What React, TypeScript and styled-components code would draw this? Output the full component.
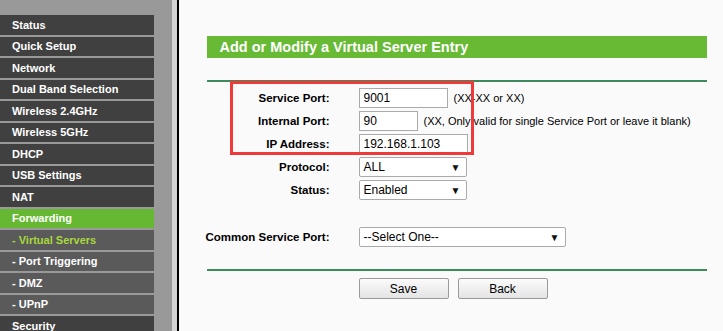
import React from 'react';
import styled, { createGlobalStyle } from 'styled-components';

const GlobalStyle = createGlobalStyle`
  html, body {
    margin: 0;
    padding: 0;
    background: #fafafa;
    font-family: "Liberation Sans", Arial, sans-serif;
  }
`;

const Page = styled.div`
  display: flex;
  width: 723px;
  height: 331px;
  overflow: hidden;
`;

const Sidebar = styled.nav`
  flex: 0 0 172px;
  background: #999999;
  padding-top: 15px;
  border-right: 5px solid #d4d4d4;
`;

const Edge = styled.div`
  flex: 0 0 1.5px;
  background: #000;
`;

const MenuItem = styled.div<{ $sub?: boolean; $active?: boolean; $current?: boolean }>`
  width: 154px;
  height: 19.5px;
  margin-bottom: 2px;
  box-sizing: border-box;
  padding-left: 12px;
  display: flex;
  align-items: center;
  font-size: 11px;
  font-weight: bold;
  white-space: nowrap;
  color: ${(p) => (p.$current ? '#a8d83c' : '#ffffff')};
  background: ${(p) => (p.$active ? '#66b832' : p.$sub ? '#5a5a5a' : '#404040')};
`;

const Main = styled.main`
  flex: 1;
  background: #fafafa;
  padding-left: 28px;
`;

const Header = styled.h2`
  margin: 36px 0 0;
  width: 500px;
  height: 22px;
  box-sizing: border-box;
  padding-left: 13px;
  background: #68b934;
  color: #fff;
  font-size: 14.5px;
  font-weight: bold;
  line-height: 22px;
`;

const Rule = styled.div<{ $top: number }>`
  width: 500px;
  height: 2px;
  margin-top: ${(p) => p.$top}px;
  background: #3f8a5c;
`;

const Form = styled.div`
  position: relative;
  margin-top: 6px;
`;

const Row = styled.div<{ $gap?: number }>`
  display: grid;
  grid-template-columns: 123px auto;
  column-gap: 29px;
  align-items: center;
  height: 20px;
  margin-bottom: ${(p) => p.$gap ?? 3}px;
`;

const Label = styled.div`
  justify-self: end;
  white-space: nowrap;
  font-size: 11.5px;
  font-weight: bold;
  color: #000;
`;

const Field = styled.div`
  display: flex;
  align-items: center;
  gap: 6px;
`;

const Input = styled.div<{ $w: number }>`
  width: ${(p) => p.$w}px;
  height: 20px;
  box-sizing: border-box;
  border: 1px solid #aaaaaa;
  background: #fff;
  padding-left: 4px;
  font-size: 12px;
  line-height: 18px;
  color: #000;
`;

const Select = styled.div<{ $w: number }>`
  width: ${(p) => p.$w}px;
  height: 20px;
  box-sizing: border-box;
  border: 1px solid #aaaaaa;
  border-radius: 2px;
  background: #fff;
  padding: 0 5px 0 4px;
  display: flex;
  align-items: center;
  justify-content: space-between;
  font-size: 12px;
  color: #000;
`;

const Arrow = styled.span`
  font-size: 10px;
  color: #111;
`;

const Hint = styled.span`
  font-size: 11px;
  color: #000;
  white-space: nowrap;
`;

const Highlight = styled.div`
  position: absolute;
  left: 23px;
  top: -7px;
  width: 244px;
  height: 74px;
  box-sizing: border-box;
  border: 3px solid #f03a3a;
  pointer-events: none;
`;

const Buttons = styled.div`
  display: flex;
  gap: 9px;
  margin: 7px 0 0 152px;
`;

const Button = styled.button`
  width: 90px;
  height: 21px;
  border: 1px solid #9a9a9a;
  border-radius: 2px;
  background: linear-gradient(#fbfbfb, #e4e4e4);
  font-family: "Liberation Sans", Arial, sans-serif;
  font-size: 12px;
  color: #000;
  padding: 0;
`;

const menu = [
  { label: 'Status' },
  { label: 'Quick Setup' },
  { label: 'Network' },
  { label: 'Dual Band Selection' },
  { label: 'Wireless 2.4GHz' },
  { label: 'Wireless 5GHz' },
  { label: 'DHCP' },
  { label: 'USB Settings' },
  { label: 'NAT' },
  { label: 'Forwarding', active: true },
  { label: '- Virtual Servers', sub: true, current: true },
  { label: '- Port Triggering', sub: true },
  { label: '- DMZ', sub: true },
  { label: '- UPnP', sub: true },
  { label: 'Security' },
];

const App: React.FC = () => (
  <>
    <GlobalStyle />
    <Page>
      <Sidebar>
        {menu.map((m) => (
          <MenuItem key={m.label} $sub={m.sub} $active={m.active} $current={m.current}>
            {m.label}
          </MenuItem>
        ))}
      </Sidebar>
      <Edge />
      <Main>
        <Header>Add or Modify a Virtual Server Entry</Header>
        <Rule $top={22} />
        <Form>
          <Row>
            <Label>Service Port:</Label>
            <Field>
              <Input $w={89}>9001</Input>
              <Hint>(XX-XX or XX)</Hint>
            </Field>
          </Row>
          <Row>
            <Label>Internal Port:</Label>
            <Field>
              <Input $w={59}>90</Input>
              <Hint>(XX, Only valid for single Service Port or leave it blank)</Hint>
            </Field>
          </Row>
          <Row>
            <Label>IP Address:</Label>
            <Field>
              <Input $w={109}>192.168.1.103</Input>
            </Field>
          </Row>
          <Row>
            <Label>Protocol:</Label>
            <Field>
              <Select $w={108}>
                ALL<Arrow>▼</Arrow>
              </Select>
            </Field>
          </Row>
          <Row $gap={27}>
            <Label>Status:</Label>
            <Field>
              <Select $w={108}>
                Enabled<Arrow>▼</Arrow>
              </Select>
            </Field>
          </Row>
          <Row $gap={0}>
            <Label>Common Service Port:</Label>
            <Field>
              <Select $w={207}>
                --Select One--<Arrow>▼</Arrow>
              </Select>
            </Field>
          </Row>
          <Highlight />
        </Form>
        <Rule $top={22} />
        <Buttons>
          <Button>Save</Button>
          <Button>Back</Button>
        </Buttons>
      </Main>
    </Page>
  </>
);

export default App;
